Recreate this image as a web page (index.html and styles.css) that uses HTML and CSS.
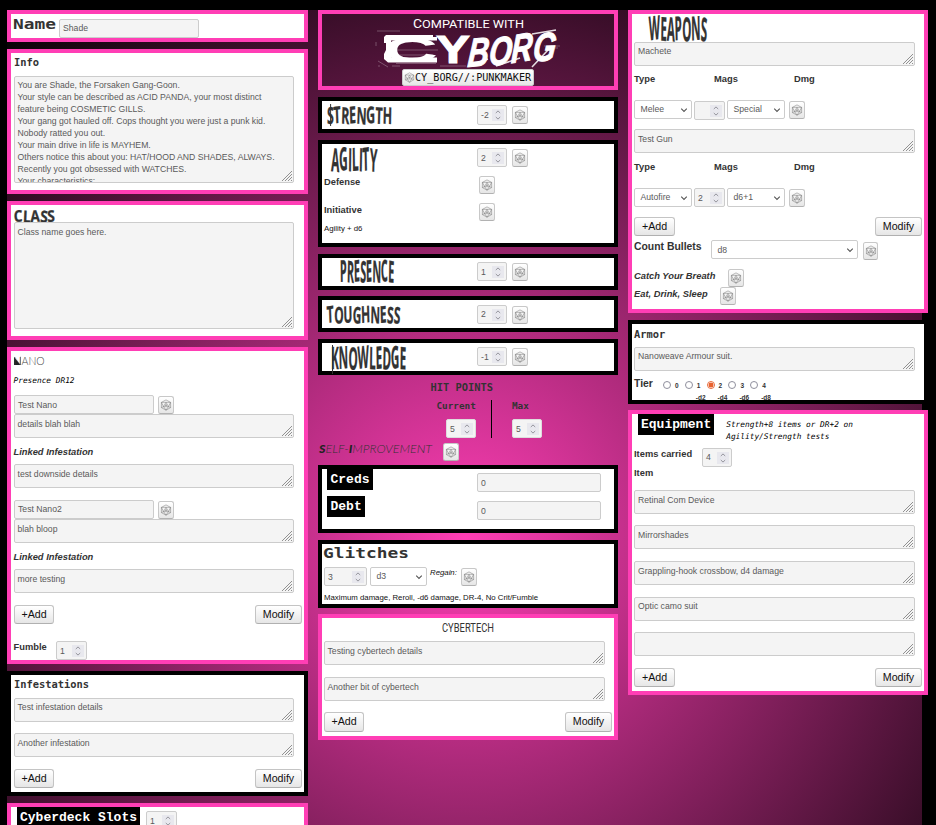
FILE: index.html
```html
<!DOCTYPE html>
<html lang="en">
<head>
<meta charset="utf-8">
<title>Character Sheet</title>
<link rel="stylesheet" href="styles.css">
</head>
<body>
<svg class="defs" width="0" height="0">
  <symbol id="die" viewBox="0 0 12 12">
    <path d="M6 .9 10.6 3.4 10.6 8.6 6 11.2 1.4 8.6 1.4 3.4Z M6 3.3 8.5 7.6 3.500 7.6Z M1.4 3.4 6 3.3 10.6 3.4 8.5 7.6 10.6 8.6 M1.4 3.4 3.5 7.6 1.4 8.6 M3.5 7.6 6 11.2 8.5 7.6" fill="none" stroke="#747474" stroke-width=".5"/>
    <circle cx="6" cy="6.2" r=".9" fill="#999"/>
  </symbol>
  <symbol id="grip" viewBox="0 0 12 12">
    <path d="M1 11 11 1 M4 11 11 4 M7 11 11 7 M10 11 11 10" fill="none" stroke="#777" stroke-width=".8"/>
  </symbol>
  <symbol id="spin" viewBox="0 0 12 12">
    <path d="M3.8 4 6 1.9 8.2 4 M3.8 8 6 10.1 8.2 8" fill="none" stroke="#94949c" stroke-width="1"/>
  </symbol>
  <symbol id="chev" viewBox="0 0 8 8">
    <path d="M1.2 2.6 4 5.4 6.8 2.6" fill="none" stroke="#555" stroke-width="1.1"/>
  </symbol>
</svg>
<main class="sheet">

  <div class="col col-1">
    <section class="panel pink name">
      <svg class="title" width="48" height="24"><text class="pixel" x="2" y="15" font-size="13.500" textLength="43" lengthAdjust="spacingAndGlyphs">Name</text></svg>
      <div class="field w140 t5">Shade</div>
    </section>

    <section class="panel pink info">
      <h3 class="mono-h t3">Info</h3>
      <div class="area up">You are Shade, the Forsaken Gang-Goon.<br>Your style can be described as ACID PANDA, your most distinct<br>feature being COSMETIC GILLS.<br>Your gang got hauled off. Cops thought you were just a punk kid.<br>Nobody ratted you out.<br>Your main drive in life is MAYHEM.<br>Others notice this about you: HAT/HOOD AND SHADES, ALWAYS.<br>Recently you got obsessed with WATCHES.<br>Your characteristics:<svg><use href="#grip"/></svg></div>
    </section>

    <section class="panel pink class">
      <svg class="title" width="60" height="17"><text class="hand" x="3" y="17" font-size="16" textLength="41" lengthAdjust="spacingAndGlyphs" rotate="-3 3 -2 4 -3">CLASS</text></svg>
      <div class="area">Class name goes here.<svg><use href="#grip"/></svg></div>
    </section>

    <section class="panel pink nano">
      <div>
        <svg class="title" width="60" height="20"><path d="M3 5.8 9.5 14V5.8H10V14H3Z" fill="#222"/><text class="thin" x="2.6" y="14" font-size="11.5" textLength="31" lengthAdjust="spacingAndGlyphs">NANO</text></svg>
        <p class="note t4 pl">Presence DR12</p>
      </div>
      <div class="row"><div class="field w140 pl3">Test Nano</div><span class="die ml4 t1"><svg><use href="#die"/></svg></span></div>
      <div class="area">details blah blah<svg><use href="#grip"/></svg></div>
      <h4 class="label it t8">Linked Infestation</h4>
      <div class="area">test downside details<svg><use href="#grip"/></svg></div>
      <i></i>
      <div class="row"><div class="field w140 raised">Test Nano2</div><span class="die ml4 t1"><svg><use href="#die"/></svg></span></div>
      <div class="area">blah bloop<svg><use href="#grip"/></svg></div>
      <h4 class="label it t8">Linked Infestation</h4>
      <div class="area">more testing<svg><use href="#grip"/></svg></div>
      <i></i>
      <div class="actions"><span class="btn">+Add</span><span class="btn mod">Modify</span></div>
      <i></i>
      <div class="row"><h4 class="label fumble">Fumble</h4><div class="field num w31">1<svg><use href="#spin"/></svg></div></div>
    </section>

    <section class="panel black infest">
      <h3 class="mono-h t3">Infestations</h3>
      <div class="area up">Test infestation details<svg><use href="#grip"/></svg></div>
      <i></i>
      <div class="area">Another infestation<svg><use href="#grip"/></svg></div>
      <i></i>
      <div class="actions"><span class="btn">+Add</span><span class="btn mod">Modify</span></div>
    </section>

    <section class="panel pink deck">
      <h3 class="tag">Cyberdeck Slots</h3>
      <div class="field num w31 t4">1<svg><use href="#spin"/></svg></div>
    </section>
  </div>

  <div class="col col-2">
    <section class="panel pink brand">
      <svg class="logo" width="292" height="55" viewBox="322 14 292 55">
        <text class="compat" x="413" y="28" font-size="12" textLength="111" lengthAdjust="spacingAndGlyphs">C<tspan font-size="11">OMPATIBLE WITH</tspan></text>
        <g stroke="#fff" opacity=".45" stroke-width=".6" fill="none">
          <path d="M377 31H400 M376 42V46 M378 61 388 67 M396 63.500H436 M395 50H438 M378 66H380 M440 66H466 M544 46H560 M545 48H558 M398 55H433 M392 66H400 M420 57H434 M449 46V62 M452 46V62"/>
        </g>
        <path d="M386 35H433V37H437V40.500H391V57.500H437V62.500H388L384 59V54L386 50V43H384V37Z" fill="#fff"/>
        <text class="cy" x="383" y="62" font-size="35" textLength="55" lengthAdjust="spacingAndGlyphs">C</text>
        <text class="cy y" x="436" y="62.500" font-size="38" textLength="34" lengthAdjust="spacingAndGlyphs">Y</text>
        <text class="borg" transform="translate(467 67) rotate(-5) skewX(-10)" font-size="40" textLength="88" lengthAdjust="spacingAndGlyphs" rotate="0 2 -3 2">BORG</text>
        <path d="M468 66 488 59 M496 66 520 58 M532 34 556 30 M532 67 548 50" stroke="#fff" stroke-width="1.600" opacity=".85"/>
      </svg>
      <div class="punk"><svg><use href="#die"/></svg><span>CY_BORG//:PUNKMAKER</span></div>
    </section>

    <section class="panel black stat strength">
      <svg class="title" width="155" height="28"><text class="hand" x="5" y="22.500" font-size="23" textLength="65" lengthAdjust="spacingAndGlyphs" rotate="0 -4 3 -3 4 -2 3 2">STRENGTH</text><path d="M8.600 3V25" stroke="#333"/></svg>
      <div class="field num w30 t4 h20">-2<svg><use href="#spin"/></svg></div><span class="die ml5 t5"><svg><use href="#die"/></svg></span>
    </section>

    <section class="panel black agility">
      <div class="row">
        <svg class="title" width="155" height="31"><text class="hand" x="9" y="27" font-size="32" textLength="46" lengthAdjust="spacingAndGlyphs" rotate="3 -3 2 -2 3 -3 4">AGILITY</text></svg>
        <div class="field num w30 t4">2<svg><use href="#spin"/></svg></div><span class="die ml5 t5"><svg><use href="#die"/></svg></span>
      </div>
      <div class="row"><h4 class="label wide">Defense</h4><span class="die"><svg><use href="#die"/></svg></span></div>
      <div class="row"><h4 class="label wide">Initiative</h4><span class="die"><svg><use href="#die"/></svg></span></div>
      <p class="tiny">Agility + d6</p>
    </section>

    <section class="panel black stat presence">
      <svg class="title" width="155" height="28"><text class="hand" x="18" y="24" font-size="30" textLength="54" lengthAdjust="spacingAndGlyphs" rotate="-2 3 -3 4 -2 2 -3 3">PRESENCE</text></svg>
      <div class="field num w30 t4">1<svg><use href="#spin"/></svg></div><span class="die ml5 t5"><svg><use href="#die"/></svg></span>
    </section>

    <section class="panel black stat tough">
      <svg class="title" width="155" height="28"><text class="hand" x="5" y="23" font-size="23" textLength="73" lengthAdjust="spacingAndGlyphs" rotate="-4 3 -2 3 -3 2 -3 4 5">TOUGHNESS</text></svg>
      <div class="field num w30 t5 raised">2<svg><use href="#spin"/></svg></div><span class="die ml5 t6"><svg><use href="#die"/></svg></span>
    </section>

    <section class="panel black stat know">
      <svg class="title" width="155" height="32"><text class="hand" x="9" y="26" font-size="31" textLength="75" lengthAdjust="spacingAndGlyphs" rotate="0 -2 3 -3 2 -2 3 -3 2">KNOWLEDGE</text><path d="M10.500 2V31" stroke="#333"/></svg>
      <div class="field num w30 t4">-1<svg><use href="#spin"/></svg></div><span class="die ml5 t5"><svg><use href="#die"/></svg></span>
    </section>

    <section class="hp">
      <h3 class="mono-h hp-title">HIT POINTS</h3>
      <div class="hp-row">
        <div class="hp-cell cur"><h4>Current</h4><div class="field num w30">5<svg><use href="#spin"/></svg></div></div>
        <div class="hp-cell max"><h4>Max</h4><div class="field num w30">5<svg><use href="#spin"/></svg></div></div>
      </div>
      <div class="self">
        <svg class="title" width="125" height="22"><text class="thin slant" x="1" y="12" font-size="11.5" textLength="113" lengthAdjust="spacingAndGlyphs"><tspan class="heavy">S</tspan>ELF-<tspan class="heavy">I</tspan>MPROVEMENT</text></svg>
        <span class="die"><svg><use href="#die"/></svg></span>
      </div>
    </section>

    <section class="panel black money">
      <div class="row"><div class="tag-cell"><h3 class="tag">Creds</h3></div><div class="field w124 t4">0</div></div>
      <div class="row"><div class="tag-cell"><h3 class="tag">Debt</h3></div><div class="field w124 t5">0</div></div>
    </section>

    <section class="panel black glitch">
      <svg class="title" width="120" height="23"><text class="pixel" x="1" y="14" font-size="13.500" textLength="86" lengthAdjust="spacingAndGlyphs">Glitches</text></svg>
      <div class="row pl2"><div class="field num w43">3<svg><use href="#spin"/></svg></div><div class="select w57">d3<svg><use href="#chev"/></svg></div><p class="tiny regain">Regain:</p><span class="die t1"><svg><use href="#die"/></svg></span></div>
      <p class="tiny t7">Maximum damage, Reroll, -d6 damage, DR-4, No Crit/Fumble</p>
    </section>

    <section class="panel pink cyber">
      <svg class="title" width="292" height="23"><text class="cond" x="120" y="14" font-size="12.500" textLength="52" lengthAdjust="spacingAndGlyphs">CYBERTECH</text></svg>
      <div class="area">Testing cybertech details<svg><use href="#grip"/></svg></div>
      <i></i>
      <div class="area">Another bit of cybertech<svg><use href="#grip"/></svg></div>
      <i></i>
      <div class="actions"><span class="btn">+Add</span><span class="btn mod">Modify</span></div>
    </section>
  </div>

  <div class="col col-3">
    <section class="panel pink weapons">
      <svg class="title" width="120" height="28"><text class="hand" x="17" y="26.500" font-size="33" textLength="58" lengthAdjust="spacingAndGlyphs" rotate="-3 2 3 -3 3 -2 5">WEAPONS</text></svg>
      <div class="area up">Machete<svg><use href="#grip"/></svg></div>
      <div class="heads"><h4 class="label">Type</h4><h4 class="label">Mags</h4><h4 class="label">Dmg</h4></div>
      <div class="row pl2"><div class="select w58">Melee<svg><use href="#chev"/></svg></div><div class="field num w31 gap2 t1">&nbsp;<svg><use href="#spin"/></svg></div><div class="select w58">Special<svg><use href="#chev"/></svg></div><span class="die ml4 t1"><svg><use href="#die"/></svg></span></div>
      <i></i>
      <div class="area">Test Gun<svg><use href="#grip"/></svg></div>
      <div class="heads second"><h4 class="label">Type</h4><h4 class="label">Mags</h4><h4 class="label">Dmg</h4></div>
      <div class="row pl2"><div class="select w58">Autofire<svg><use href="#chev"/></svg></div><div class="field num w31 gap2">2<svg><use href="#spin"/></svg></div><div class="select w58">d6+1<svg><use href="#chev"/></svg></div><span class="die ml4 t1"><svg><use href="#die"/></svg></span></div>
      <i></i>
      <div class="actions"><span class="btn">+Add</span><span class="btn mod">Modify</span></div>
      <i></i>
      <div class="row"><h4 class="label big bullets">Count Bullets</h4><div class="select w147 low">d8<svg><use href="#chev"/></svg></div><span class="die ml5 t2 w15"><svg><use href="#die"/></svg></span></div>
      <i></i>
      <div class="row"><h4 class="label it breath">Catch Your Breath</h4><span class="die"><svg><use href="#die"/></svg></span></div>
      <div class="row"><h4 class="label it sleep">Eat, Drink, Sleep</h4><span class="die"><svg><use href="#die"/></svg></span></div>
    </section>

    <section class="panel black armor">
      <h3 class="mono-h t4">Armor</h3>
      <div class="area up">Nanoweave Armour suit.<svg><use href="#grip"/></svg></div>
      <div class="tiers">
        <h4 class="label big">Tier</h4>
        <div class="tier"><span class="radio"></span><b>0</b></div>
        <div class="tier"><span class="radio"></span><b>1</b><em>-d2</em></div>
        <div class="tier"><span class="radio on"></span><b>2</b><em>-d4</em></div>
        <div class="tier"><span class="radio"></span><b>3</b><em>-d6</em></div>
        <div class="tier"><span class="radio"></span><b>4</b><em>-d8</em></div>
      </div>
    </section>

    <section class="panel pink equip">
      <div class="row"><h3 class="tag">Equipment</h3><p class="note rule">Strength+8 items or DR+2 on<br>Agility/Strength tests</p></div>
      <div class="row"><h4 class="label carried">Items carried</h4><div class="field num w30 raised">4<svg><use href="#spin"/></svg></div></div>
      <h4 class="label">Item</h4>
      <div class="area">Retinal Com Device<svg><use href="#grip"/></svg></div>
      <i></i>
      <div class="area">Mirrorshades<svg><use href="#grip"/></svg></div>
      <i></i>
      <div class="area">Grappling-hook crossbow, d4 damage<svg><use href="#grip"/></svg></div>
      <i></i>
      <div class="area up">Optic camo suit<svg><use href="#grip"/></svg></div>
      <i></i>
      <div class="area"><svg><use href="#grip"/></svg></div>
      <i></i>
      <div class="actions"><span class="btn">+Add</span><span class="btn mod">Modify</span></div>
    </section>
  </div>
</main>
</body>
</html>
```
FILE: styles.css
```css
* { box-sizing: border-box; }
html, body { height: 825px; overflow: hidden; }
body { margin: 0; padding: 10px 0 0 7px; background: #000; color: #333; font-family: "Liberation Sans", Arial, sans-serif; }
h3, h4, p { margin: 0; }
.defs { display: none; }

.sheet {
  width: 915px; height: 815px;
  display: flex; gap: 10px;
  background: radial-gradient(circle 698px at 458px 527px, #ff3eb5, #000);
}
.col { flex: none; width: 300px; display: flex; flex-direction: column; gap: 7px; }
.col-1 { width: 301px; }

/* Panels */
.panel { flex: none; border: 4px solid #ff3eb5; background: #fff; display: grid; align-content: start; align-items: start; }
.panel.black { border-color: #000; }
.panel > *, .row > * { min-width: 0; }
.row { display: flex; align-items: flex-start; }
.title { display: block; overflow: visible; flex: none; }

.name { height: 32px; display: flex; }
.info { height: 145px; grid-template-rows: 23px 107px; }
.class { height: 139px; grid-template-rows: 17px 107px; }
.nano { height: 317px; grid-template-rows: 44px 19px 24px 26px 24px 12px 19px 24px 26px 24px 12px 19px 17px 19px; }
.infest { height: 125px; grid-template-rows: 23px 24px 11px 24px 12px 19px; }
.panel.deck { height: 22px; display: flex; gap: 6px; border-bottom: 0; overflow: hidden; }

.brand { height: 80px; background: none; }
.stat { height: 36px; display: flex; }
.agility { height: 107px; grid-template-rows: 32px 27px 21px 20px; }
.tough { margin-top: -1px; }
.money { height: 68px; grid-template-rows: 27px 28px; }
.glitch { height: 68px; grid-template-rows: 23px 19px 16px; }
.cyber { height: 126px; margin-top: -1px; grid-template-rows: 23px 24px 12px 24px 11px 20px; }

.weapons { height: 303px; grid-template-rows: 28px 24px 34px 20px 9px 24px 35px 19px 10px 19px 4px 19px 10px 18px 18px; }
.armor { height: 84px; grid-template-rows: 23px 24px 29px; }
.equip { height: 285px; margin-top: -1px; grid-template-rows: 34px 19px 23px 24px 11px 24px 12px 24px 12px 24px 11px 24px 12px 19px; }

/* Controls */
.field, .area, .select {
  border: 1px solid #ccc; border-radius: 2px; background: #f4f4f4; color: #5a5a5a;
  font-size: 8.67px; white-space: nowrap; overflow: hidden; flex: none;
}
.field { height: 19px; line-height: 18px; padding-left: 3px; }
.field.raised { line-height: 17px; }
.name .field { line-height: 16px; }
.field.h20 { height: 20px; }
.col-1 .row > .field.w140 { margin-left: 3px; }
.w140 { width: 140px; }
.w124 { width: 124px; }
.num { display: flex; justify-content: space-between; padding-right: 2px; }
.num svg { width: 12px; height: 12px; margin-top: 3px; background: #e8e8ee; }
.area { height: 100%; margin-left: 2px; width: 281px; padding: 3px 0 0 3px; line-height: 12px; position: relative; }
.col-1 .area { margin-left: 3px; width: 280px; padding-left: 2.500px; }
.col-2 .area { padding-left: 2.500px; }
.area.up { padding-top: 2px; }
.area svg { position: absolute; right: 0; bottom: 0; width: 12px; height: 12px; }
.select { height: 19px; line-height: 17px; padding: 0 3px 0 5.500px; background: #fff; display: flex; justify-content: space-between; align-items: center; }
.select svg { width: 8px; height: 8px; }
.select.low { padding-top: 1px; }
.w30 { width: 30px; }
.w31 { width: 31px; }
.w43 { width: 43px; }
.w57 { width: 57px; }
.w58 { width: 58px; }
.w147 { width: 147px; }
.gap2 { margin: 0 2px; }
.gap2.t1 { margin-top: 1px; }

.die {
  flex: none; width: 16px; height: 18px; border: 1px solid #c8c8c8; border-bottom-color: #b2b2b2; border-radius: 2.500px;
  background: linear-gradient(#fff, #e6e6e6); display: flex; justify-content: center; align-items: flex-start;
}
.die.w15 { width: 15px; }
.die svg { width: 12px; height: 12px; margin-top: 2px; flex: none; }
.actions { display: flex; justify-content: space-between; padding: 0 2px; height: 100%; }
.col-1 .actions { padding-left: 3px; }
.btn {
  width: 40px; border: 1px solid #c4c4c4; border-bottom-color: #b0b0b0; border-radius: 3px;
  background: linear-gradient(#fff, #e6e6e6); color: #111;
  font-size: 10.67px; line-height: 17px; text-align: center;
}
.btn.mod { width: 47px; }
.col-3 .btn:first-child { width: 41px; }

/* Type */
.label { font-size: 9.33px; line-height: 12px; font-weight: bold; padding-left: 2px; white-space: nowrap; flex: none; }
.label.it { font-style: italic; }
.label.big { font-size: 10.4px; line-height: 13px; }
.col-1 .label { padding-left: 2.500px; }
.mono-h { font: bold 10.4px/13px "DejaVu Sans Mono", monospace; padding-left: 2px; }
.col-1 .mono-h { padding-left: 3px; }
.note { font: italic 7.8px/12px "DejaVu Sans Mono", monospace; color: #000; white-space: nowrap; }
.pl { padding-left: 2.500px; }
.tiny { font-size: 7.8px; line-height: 10px; color: #111; padding-left: 2px; white-space: nowrap; }
.tag { flex: none; width: max-content; margin-left: 6px; padding: 0 3px; background: #000; color: #fff; font: bold 13px/21px "Liberation Mono", monospace; }

.hand { font-family: "Open Sans", sans-serif; font-weight: bold; fill: #333; stroke: #333; stroke-width: .3; }
.pixel { font-family: "DejaVu Sans Mono", monospace; font-weight: bold; fill: #333; }
.thin { font-family: Lato, sans-serif; font-weight: 300; fill: #444; }
.thin.slant { font-style: italic; fill: #333; }
.heavy { font-weight: 900; fill: #222; }
.cond { font-family: Roboto, sans-serif; fill: #333; }

/* Brand */
.logo { display: block; }
.compat { font-family: Roboto, sans-serif; fill: #fff; }
.cy { font-family: "Liberation Sans", sans-serif; font-weight: bold; fill: #fff; }
.cy.y { stroke: #fff; stroke-width: 1; }
.borg { font-family: "Liberation Sans", sans-serif; font-style: italic; font-weight: bold; fill: #fff; stroke: #fff; stroke-width: 1; }
.punk { width: 132px; height: 17px; margin-left: 80px; display: flex; align-items: center; padding: 0 0 1px 1px; border: 1px solid #ccc; border-radius: 2px; background: linear-gradient(#fff, #e6e6e6); color: #111; font: 10.17px/13px "DejaVu Sans Mono", monospace; }
.punk svg { width: 11px; height: 11px; flex: none; }

/* Hit points */
.hp { height: 83px; flex: none; margin-bottom: -7px; }
.hp-title { padding: 0 0 0 112.500px; line-height: 11px; }
.hp-row { display: flex; height: 38px; margin-top: 7px; }
.hp-cell h4 { font: bold 9.33px/12px "DejaVu Sans Mono", monospace; }
.hp-cell .field { margin-top: 7px; border-color: #ddd; }
.cur { width: 174px; padding-left: 118.500px; border-right: 1px solid #000; }
.cur .field { margin-left: 9.500px; }
.max { padding-left: 20px; }
.self { display: flex; align-items: flex-start; margin-top: 5px; }
.self .title { margin-top: -2px; }

/* Row details */
.fumble { width: 45px; }
.wide { width: 157px; }
.agility .row + .row + .row .label { padding-top: 1px; }
.tag-cell { width: 155px; padding-right: 1px; flex: none; }
.money .tag { margin-left: 5px; padding: 0 3.500px; }
.pl2 { padding-left: 2px; }
.glitch .select { margin: 0 3px; }
.regain { font-style: italic; padding: 1px 0 0; width: 31px; }
.heads { display: grid; grid-template-columns: 80px 80px 80px; padding-top: 7px; }
.heads.second { padding-top: 8px; }
.bullets { width: 79px; }
.breath { width: 96px; padding-top: 1px; }
.sleep { width: 88px; padding-top: 1px; }
.rule { margin: 5px 0 0 12px; }
.carried { width: 70px; }

.tiers { display: flex; height: 29px; overflow: hidden; padding-top: 6px; }
.tiers .label { width: 31px; }
.tier { flex: none; width: 21.800px; display: grid; grid-template-columns: 12px 9px; font-size: 6.5px; line-height: 10px; align-content: start; padding-top: 4px; }
.tier em { grid-column: 1 / 3; font-style: normal; font-weight: bold; padding-left: 11px; margin-top: 2px; }
.radio { width: 8px; height: 8px; border: 1px solid #8f8f9d; border-radius: 50%; background: #fff; }
.radio.on { border-color: #e86a3a; background: radial-gradient(circle, #e8622f 0 2.200px, #fff 2.700px); }

/* Offsets */
.ml4 { margin-left: 4px; }
.ml5 { margin-left: 5px; }
.t1 { margin-top: 1px; }
.t2 { margin-top: 2px; }
.t3 { margin-top: 3px; }
.t4 { margin-top: 4px; }
.t5 { margin-top: 5px; }
.t6 { margin-top: 6px; }
.t7 { margin-top: 7px; }
.t8 { margin-top: 8px; }
```
